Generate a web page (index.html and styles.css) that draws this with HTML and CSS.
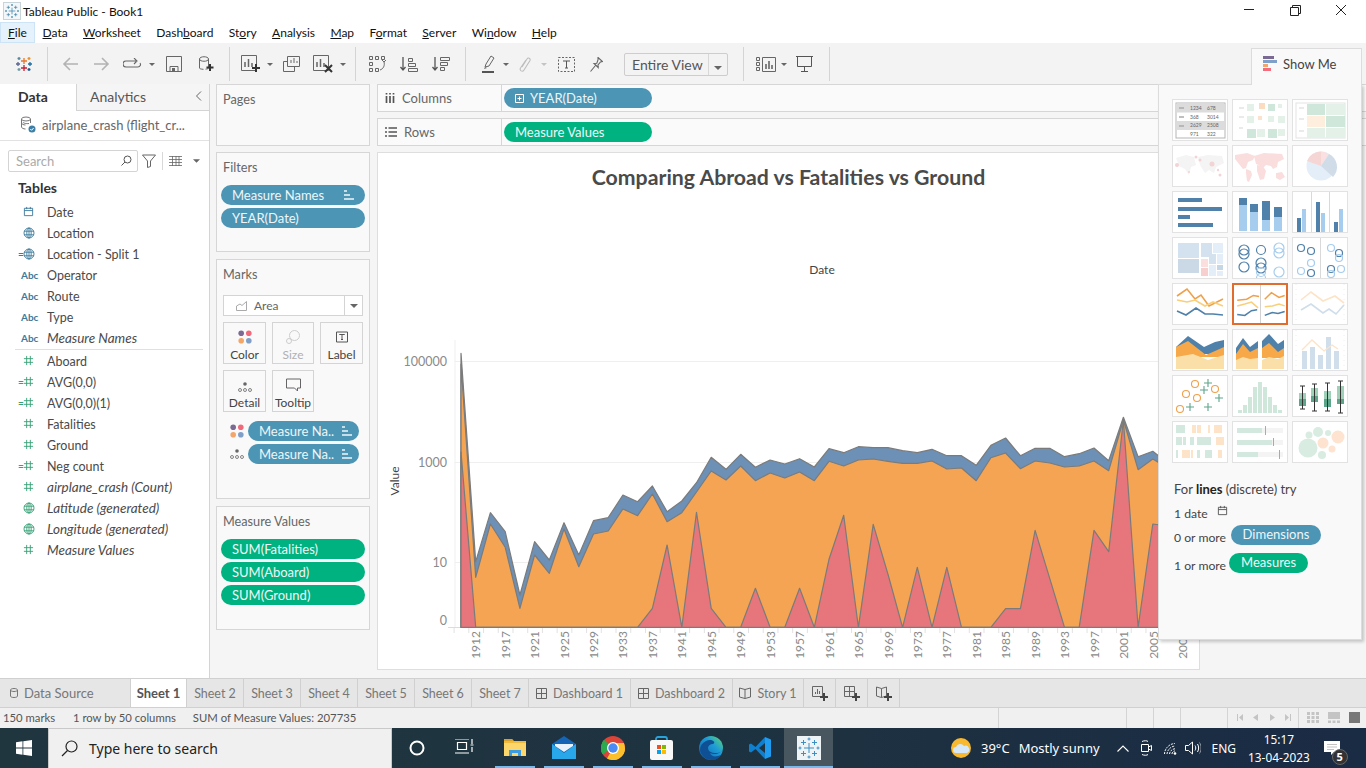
FILE: index.html
```html
<!DOCTYPE html>
<html>
<head>
    <title>Tableau Public - Book1</title>
    <link rel="stylesheet" href="styles.css">
</head>
<body>
<svg class="sprite" width="0" height="0">
    <defs>
        <symbol id="cal" viewBox="0 0 12 12"><path d="M1.5 2.5h9v8h-9zM1.5 5h9M4 1v2.5M8 1v2.5" fill="none" stroke="currentColor"/></symbol>
        <symbol id="globe" viewBox="0 0 12 12"><g fill="none" stroke="currentColor" stroke-width=".9"><circle cx="6" cy="6" r="5"/><ellipse cx="6" cy="6" rx="2.2" ry="5"/><path d="M1 4.2h10M1 7.8h10M6 1v10"/></g></symbol>
        <symbol id="hash" viewBox="0 0 12 12"><path d="M4 1v10M8 1v10M1 4h10M1 8h10" fill="none" stroke="currentColor"/></symbol>
        <symbol id="sort" viewBox="0 0 10 10"><path d="M0 1h3M0 5h6M0 9h10" fill="none" stroke="currentColor" stroke-width="1.6"/></symbol>
        <symbol id="caret" viewBox="0 0 8 4"><path d="M0 0h8L4 4z" fill="currentColor"/></symbol>
        <symbol id="dots" viewBox="0 0 14 14"><circle cx="3.2" cy="3.2" r="2.8" fill="#7b6a94"/><circle cx="10.8" cy="3.2" r="2.8" fill="#ef6b7c"/><circle cx="3.2" cy="10.8" r="2.8" fill="#f2a66a"/><circle cx="10.8" cy="10.8" r="2.8" fill="#7f9fc8"/></symbol>
        <symbol id="detail" viewBox="0 0 14 10"><circle cx="7" cy="2" r="1.8" fill="#666"/><g fill="none" stroke="#666" stroke-width=".8"><circle cx="2" cy="8" r="1.5"/><circle cx="7" cy="8" r="1.5"/><circle cx="12" cy="8" r="1.5"/></g></symbol>
        <symbol id="tableau" viewBox="0 0 24 24"><path d="M12 7v10M7 12h10M6.500 4v5M4 6.500h5M17.500 4v5M15 6.500h5M6.500 15v5M4 17.500h5M17.500 15v5M15 17.500h5M12 1.500v3M10.500 3h3M12 19.500v3M10.500 21h3M3 10.500v3M1.500 12h3M21 10.500v3M19.500 12h3" fill="none" stroke="currentColor"/></symbol>
        <symbol id="plus" viewBox="0 0 8 8"><path d="M4 0v8M0 4h8" stroke="#444" stroke-width="2"/></symbol>
    </defs>
</svg>

<div class="app">
    <div class="titlebar">
        <svg class="app-icon" width="18" height="18" viewBox="0 0 18 18"><rect x=".5" y=".5" width="17" height="17" fill="#f4f7f9" stroke="#c9d3da"/><svg x="1" y="1" width="16" height="16" color="#2f7ba6"><use href="#tableau"/></svg></svg>
        <span class="app-title">Tableau Public - Book1</span>
        <div class="win-btns">
            <svg width="46" height="22" viewBox="0 0 46 22"><path d="M18 9.5h10" stroke="#222"/></svg>
            <svg width="46" height="22" viewBox="0 0 46 22"><path d="M18.5 7.5h8v8h-8zM20.5 7.5v-2h8v8h-2" fill="none" stroke="#222"/></svg>
            <svg width="46" height="22" viewBox="0 0 46 22"><path d="M18 5l10 10M28 5L18 15" stroke="#222" fill="none"/></svg>
        </div>
    </div>

    <div class="menubar">
        <span class="menu-item menu-active"><u>F</u>ile</span>
        <span class="menu-item"><u>D</u>ata</span>
        <span class="menu-item"><u>W</u>orksheet</span>
        <span class="menu-item">Dash<u>b</u>oard</span>
        <span class="menu-item">St<u>o</u>ry</span>
        <span class="menu-item"><u>A</u>nalysis</span>
        <span class="menu-item"><u>M</u>ap</span>
        <span class="menu-item">F<u>o</u>rmat</span>
        <span class="menu-item"><u>S</u>erver</span>
        <span class="menu-item">Wi<u>n</u>dow</span>
        <span class="menu-item"><u>H</u>elp</span>
    </div>

    <div class="toolbar">
        <div class="tb-group tb-logo">
            <svg width="18" height="18" viewBox="0 0 18 18"><g fill="none" stroke-width="1.3"><path d="M9 3v6M6 6h6" stroke="#e8762c"/><path d="M9 10v6M6 13h6" stroke="#c72037"/><path d="M3 7v4M1 9h4" stroke="#5b6591"/><path d="M15 7v4M13 9h4" stroke="#1f6fa5"/><path d="M4 2v3M2.500 3.500h3" stroke="#59879b"/><path d="M14 2v3M12.500 3.500h3" stroke="#eb912b"/><path d="M4 13v3M2.500 14.500h3" stroke="#7099a6"/><path d="M14 13v3M12.500 14.500h3" stroke="#1c5a8c"/></g></svg>
        </div>
        <div class="tb-group tb-g2">
            <span class="tb-btn"><svg width="16" height="14" viewBox="0 0 16 14"><path d="M16 7H2M8 1L2 7l6 6" fill="none" stroke="#b3b3b3" stroke-width="1.6"/></svg></span>
            <span class="tb-btn"><svg width="16" height="14" viewBox="0 0 16 14"><path d="M0 7h14M8 1l6 6-6 6" fill="none" stroke="#b3b3b3" stroke-width="1.6"/></svg></span>
            <span class="tb-btn tb-narrow"><svg width="19" height="12" viewBox="0 0 19 12"><path d="M13 3H3a2.500 2.500 0 0 0 0 6h12a2.500 2.500 0 0 0 2-4M11 0l3 3-3 3" fill="none" stroke="#666" stroke-width="1.1"/></svg></span>
            <span class="tb-caret"><svg width="6" height="3"><use href="#caret"/></svg></span>
            <span class="tb-btn"><svg width="16" height="16" viewBox="0 0 16 16"><path d="M.5.5h15v15H.5zM4 15.500v-5h8v5" fill="none" stroke="#666"/><rect x="6" y="12" width="3" height="3.500" fill="#666"/></svg></span>
            <span class="tb-btn"><svg width="15" height="16" viewBox="0 0 15 16"><path d="M.5 3c0-3 9-3 9 0v9c0 .7-1.500 1-3 1.200M.5 3c0 3 9 3 9 0M.5 3v9c0 .7 1.500 1.200 4 1.300" fill="none" stroke="#666"/><path d="M11 8v7M7.500 11.500h7" stroke="#333" stroke-width="2"/></svg></span>
        </div>
        <div class="tb-group tb-g3">
            <span class="tb-btn"><svg width="19" height="18" viewBox="0 0 19 18"><path d="M.5.5h15v15H.5z" fill="none" stroke="#666"/><path d="M4 7v5M7.500 4v8M11 8v4" stroke="#666" stroke-width="1.500"/><path d="M15 9v8M11 13h8" stroke="#333" stroke-width="2"/></svg></span>
            <span class="tb-caret tb-tight"><svg width="6" height="3"><use href="#caret"/></svg></span>
            <span class="tb-btn tb-shift"><svg width="17" height="16" viewBox="0 0 17 16"><path d="M4.500.5h12v10h-12zM.5 5.500h4M.5 5.500v10h11v-5" fill="none" stroke="#666"/><path d="M8 7V4M11 7V2M14 7V5" stroke="#666"/></svg></span>
            <span class="tb-btn"><svg width="20" height="18" viewBox="0 0 20 18"><path d="M.5.5h15v15H.5z" fill="none" stroke="#666"/><path d="M4 7v5M7.500 4v8M11 8v4" stroke="#666" stroke-width="1.500"/><path d="M12 10l7 7M19 10l-7 7" stroke="#333" stroke-width="2"/></svg></span>
            <span class="tb-caret tb-tight"><svg width="6" height="3"><use href="#caret"/></svg></span>
        </div>
        <div class="tb-group tb-g4">
            <span class="tb-btn"><svg width="17" height="16" viewBox="0 0 17 16"><g fill="none" stroke="#666"><path d="M.5.500h3v3h-3zM6.500.500h3v3h-3zM12.500.500h3v3h-3zM.5 6.500h3v3h-3zM.5 12.500h3v3h-3zM6.500 12.500h3v3h-3z"/><path d="M15 6c1 3-.5 7-4 8M13 4l2 2 2-2"/></g></svg></span>
            <span class="tb-btn"><svg width="18" height="15" viewBox="0 0 18 15"><path d="M3 0v13M.5 10L3 13l2.500-3" fill="none" stroke="#555" stroke-width="1.300"/><path d="M8.500 1.500h4v3h-4zM8.500 6.500h7v3h-7zM8.500 11.500h9v3h-9z" fill="none" stroke="#666"/></svg></span>
            <span class="tb-btn"><svg width="18" height="15" viewBox="0 0 18 15"><path d="M3 0v13M.5 10L3 13l2.500-3" fill="none" stroke="#555" stroke-width="1.300"/><path d="M8.500 .5h9v3h-9zM8.500 5.500h7v3h-7zM8.500 10.500h4v3h-4z" fill="none" stroke="#666"/></svg></span>
        </div>
        <div class="tb-group tb-g5">
            <span class="tb-btn tb-narrow"><svg width="13" height="18" viewBox="0 0 13 18"><path d="M3 12l1-3 5-8 3 2-5 8z" fill="none" stroke="#666"/><path d="M0 17h12" stroke="#555" stroke-width="2"/><path d="M2 14l1-2 2 1z" fill="#666"/></svg></span>
            <span class="tb-caret tb-tight"><svg width="6" height="3"><use href="#caret"/></svg></span>
            <span class="tb-btn tb-narrow"><svg width="13" height="17" viewBox="0 0 13 17"><path d="M4 11l5-8c1-2 4-.5 3 1.500L6 14c-1.500 2.500-5 .5-3.500-2L8 4" fill="none" stroke="#bdbdbd" stroke-width="1.100"/></svg></span>
            <span class="tb-caret tb-off"><svg width="6" height="3"><use href="#caret"/></svg></span>
            <span class="tb-btn"><svg width="17" height="15" viewBox="0 0 17 15"><path d="M.5.500h16v14H.5z" fill="none" stroke="#666" stroke-dasharray="2 1.500"/><path d="M5 4h7M8.500 4v7M7 11h3" fill="none" stroke="#555"/></svg></span>
            <span class="tb-btn tb-narrow"><svg width="13" height="15" viewBox="0 0 13 15"><path d="M8 .5l4.500 4-2 .5-2.500 3 .2 2.500L4 6.500 6.800 6.300 8 3zM5.500 8.500L.5 14.500" fill="none" stroke="#666" stroke-width="1.100"/></svg></span>
            <div class="fit-box">
                <span class="fit-label">Entire View</span>
                <span class="fit-arrow"><svg width="8" height="4"><use href="#caret"/></svg></span>
            </div>
        </div>
        <div class="tb-group tb-g6">
            <span class="tb-btn tb-narrow"><svg width="20" height="15" viewBox="0 0 20 15"><path d="M.5.500h3v3h-3zM.5 5.500h3v3h-3zM.5 10.500h3v3h-3zM6.500.500h13v14h-13z" fill="none" stroke="#666"/><path d="M10 12V7M13 12V4M16 12V8" stroke="#666" stroke-width="1.600"/></svg></span>
            <span class="tb-caret tb-tight"><svg width="6" height="3"><use href="#caret"/></svg></span>
            <span class="tb-btn"><svg width="17" height="16" viewBox="0 0 17 16"><path d="M0 .5h17M1.500 1v9.500h14V1M8.500 10.500v4.500M5 15.500h7" fill="none" stroke="#555"/></svg></span>
        </div>
    </div>

    <div class="main">
        <aside class="side">
            <div class="side-tabs">
                <div class="side-tab side-tab-on">Data</div>
                <div class="side-tab">Analytics</div>
                <span class="side-collapse"><svg width="7" height="10" viewBox="0 0 7 10"><path d="M6 .5L1.500 5 6 9.500" fill="none" stroke="#666"/></svg></span>
            </div>
            <div class="ds-row">
                <svg width="16" height="17" viewBox="0 0 16 17"><g fill="none" stroke="#777"><ellipse cx="6" cy="3" rx="4.500" ry="2"/><path d="M1.500 3v8c0 1 2 2 4 2M10.500 3v4M3 6c0 1 3 2 6 1.500M1.500 7c0 1 2 2 4 2"/></g><circle cx="12" cy="13" r="3.500" fill="#3d7fa6"/><path d="M10.300 13l1.300 1.300 2-2.300" stroke="#fff" fill="none"/></svg>
                <span>airplane_crash (flight_cr...</span>
            </div>
            <div class="search-row">
                <div class="search-box">
                    <span>Search</span>
                    <svg width="11" height="11" viewBox="0 0 11 11"><circle cx="6.500" cy="4.500" r="3.500" fill="none" stroke="#555"/><path d="M4 7l-3.500 3.500" stroke="#555"/></svg>
                </div>
                <svg class="search-filter" width="14" height="14" viewBox="0 0 14 14"><path d="M.5 1h13L8.500 7v5.500l-3 1V7z" fill="none" stroke="#666"/></svg>
                <span class="search-sep"></span>
                <svg class="search-list" width="13" height="10" viewBox="0 0 13 10"><path d="M0 .5h13M0 3.500h13M0 6.500h13M0 9.500h13M3.500 0v10M7 0v10M10 0v10" stroke="#666" stroke-width=".8" fill="none"/></svg>
                <svg class="search-caret" width="7" height="4"><use href="#caret"/></svg>
            </div>
            <h4 class="tables-head">Tables</h4>
            <div class="field-list">
                <div class="field dim"><span class="f-icon"><svg width="11" height="11"><use href="#cal"/></svg></span>Date</div>
                <div class="field dim"><span class="f-icon"><svg width="12" height="12"><use href="#globe"/></svg></span>Location</div>
                <div class="field dim"><span class="f-icon"><i class="calc">=</i><svg width="12" height="12"><use href="#globe"/></svg></span>Location - Split 1</div>
                <div class="field dim"><span class="f-icon f-abc">Abc</span>Operator</div>
                <div class="field dim"><span class="f-icon f-abc">Abc</span>Route</div>
                <div class="field dim"><span class="f-icon f-abc">Abc</span>Type</div>
                <div class="field dim field-gen"><span class="f-icon f-abc">Abc</span>Measure Names</div>
                <div class="field-sep"></div>
                <div class="field mea"><span class="f-icon"><svg width="11" height="11"><use href="#hash"/></svg></span>Aboard</div>
                <div class="field mea"><span class="f-icon"><i class="calc">=</i><svg width="11" height="11"><use href="#hash"/></svg></span>AVG(0,0)</div>
                <div class="field mea"><span class="f-icon"><i class="calc">=</i><svg width="11" height="11"><use href="#hash"/></svg></span>AVG(0,0)(1)</div>
                <div class="field mea"><span class="f-icon"><svg width="11" height="11"><use href="#hash"/></svg></span>Fatalities</div>
                <div class="field mea"><span class="f-icon"><svg width="11" height="11"><use href="#hash"/></svg></span>Ground</div>
                <div class="field mea"><span class="f-icon"><i class="calc">=</i><svg width="11" height="11"><use href="#hash"/></svg></span>Neg count</div>
                <div class="field mea field-gen"><span class="f-icon"><svg width="11" height="11"><use href="#hash"/></svg></span>airplane_crash (Count)</div>
                <div class="field mea field-gen"><span class="f-icon"><svg width="12" height="12"><use href="#globe"/></svg></span>Latitude (generated)</div>
                <div class="field mea field-gen"><span class="f-icon"><svg width="12" height="12"><use href="#globe"/></svg></span>Longitude (generated)</div>
                <div class="field mea field-gen"><span class="f-icon"><svg width="11" height="11"><use href="#hash"/></svg></span>Measure Values</div>
            </div>
        </aside>

        <div class="cards">
            <section class="card card-pages"><h5>Pages</h5></section>
            <section class="card card-filters">
                <h5>Filters</h5>
                <div class="pill pill-blue">Measure Names<svg width="10" height="10"><use href="#sort"/></svg></div>
                <div class="pill pill-blue">YEAR(Date)</div>
            </section>
            <section class="card card-marks">
                <h5>Marks</h5>
                <div class="marks-select">
                    <svg width="11" height="10" viewBox="0 0 11 10"><path d="M.5 9.500V5L4 3l2 1.500L10.500.5v9z" fill="none" stroke="#aaa"/></svg>
                    <span>Area</span>
                    <i class="marks-arrow"><svg width="8" height="4"><use href="#caret"/></svg></i>
                </div>
                <div class="marks-grid">
                    <div class="mark-btn"><svg width="14" height="14"><use href="#dots"/></svg>Color</div>
                    <div class="mark-btn mark-off"><svg width="14" height="14" viewBox="0 0 14 14"><g fill="none" stroke="#ccc"><circle cx="8.500" cy="5.500" r="5"/><circle cx="3" cy="11" r="2.500"/></g></svg>Size</div>
                    <div class="mark-btn"><svg width="14" height="14" viewBox="0 0 14 14"><path d="M1.500 2h11v10h-11z" fill="none" stroke="#555"/><path d="M4.500 5V4.500h5V5M7 4.500v5M6 9.500h2" fill="none" stroke="#555"/></svg>Label</div>
                    <div class="mark-btn"><svg width="14" height="10"><use href="#detail"/></svg>Detail</div>
                    <div class="mark-btn"><svg width="15" height="14" viewBox="0 0 15 14"><path d="M.5 1h14v9h-3v3L8.500 10H.5z" fill="none" stroke="#666"/></svg>Tooltip</div>
                </div>
                <div class="mark-pill">
                    <svg width="14" height="14"><use href="#dots"/></svg>
                    <div class="pill pill-blue">Measure Na..<svg width="10" height="10"><use href="#sort"/></svg></div>
                </div>
                <div class="mark-pill">
                    <svg width="14" height="10"><use href="#detail"/></svg>
                    <div class="pill pill-blue">Measure Na..<svg width="10" height="10"><use href="#sort"/></svg></div>
                </div>
            </section>
            <section class="card card-values">
                <h5>Measure Values</h5>
                <div class="pill pill-green">SUM(Fatalities)</div>
                <div class="pill pill-green">SUM(Aboard)</div>
                <div class="pill pill-green">SUM(Ground)</div>
            </section>
        </div>

        <div class="workspace">
            <div class="shelf">
                <div class="shelf-label"><svg width="10" height="10" viewBox="0 0 10 10"><path d="M1.500 3v7M5 3v7M8.500 3v7M1.500 0v1.500M5 0v1.500M8.500 0v1.500" stroke="#555" stroke-width="1.700"/></svg>Columns</div>
                <div class="pill pill-blue pill-shelf"><svg class="pill-plus" width="9" height="9" viewBox="0 0 9 9"><path d="M.5.500h8v8h-8zM2.500 4.500h4M4.500 2.500v4" fill="none" stroke="#fff"/></svg>YEAR(Date)</div>
            </div>
            <div class="shelf">
                <div class="shelf-label"><svg width="12" height="10" viewBox="0 0 12 10"><path d="M0 1h2M3.500 1H12M0 5h2M3.500 5H12M0 9h2M3.500 9H12" stroke="#555" stroke-width="1.600"/></svg>Rows</div>
                <div class="pill pill-green pill-shelf">Measure Values</div>
            </div>
            <div class="sheet">
                <h2 class="sheet-title">Comparing Abroad vs Fatalities vs Ground</h2>
                <svg class="chart" width="821" height="470" viewBox="378 200 821 470">
                    <text class="ax-head" x="822" y="274" text-anchor="middle">Date</text>
                    <text class="ax-head" transform="translate(399 481) rotate(-90)" text-anchor="middle">Value</text>
                    <path d="M455 340V628M455 361.500H1199M455 462.500H1199M455 562.500H1199" fill="none" stroke="#efefef"/>
                    <path d="M448 627.500H1199" fill="none" stroke="#dcdcdc"/>
                    <path d="M453.600 630.500H1199" fill="none" stroke="#e2e2e2" stroke-width="5" stroke-dasharray="1 13.720"/>
                    <g class="ax-y" text-anchor="end">
                        <text x="447" y="366">100000</text>
                        <text x="447" y="467">1000</text>
                        <text x="447" y="567">10</text>
                        <text x="447" y="625">0</text>
                    </g>
                    <g class="areas">
                        <polygon class="a-blue" points="461,627.3 461,353.3 475.7,561.7 490.4,512.7 505.2,531.7 519.9,595 534.6,541.7 549.3,560 564,522.700 578.8,555 593.5,520.7 608.2,517.7 622.9,495 637.6,501.7 652.4,486 667.1,511.7 681.8,501 696.5,482.7 711.2,457.3 726,469.3 740.7,454.3 755.4,467.3 770.1,460 784.8,464 799.6,458.7 814.300,467 829,448.7 843.700,452.7 858.400,446.7 873.200,447.7 887.900,447.7 902.600,450.7 917.300,452.7 932,449.3 946.800,455.7 961.500,455.7 976.200,465.3 990.900,445.3 1005.600,438 1020.400,455.7 1035.100,448.3 1049.800,448.3 1064.500,456.7 1079.200,453.700 1094,448 1108.700,460.7 1123.400,417.3 1138.100,456.700 1152.800,451.3 1167.600,463 1182,460 1182,627.3"/>
                        <polygon class="a-orange" points="461,627.3 461,364 475.7,577.3 490.4,524 505.2,547.3 519.9,608.3 534.6,555 549.3,573.3 564,529 578.8,566.7 593.5,534 608.2,531 622.9,509 637.6,515.7 652.4,494 667.1,521.7 681.8,512.7 696.5,492 711.2,471 726,480 740.7,466 755.4,480.7 770.1,473 784.8,478 799.6,472 814.300,480.7 829,461.3 843.700,466 858.400,460 873.200,459 887.900,461.3 902.600,463.3 917.300,463.3 932,461 946.800,469 961.500,468 976.200,480.7 990.900,457.7 1005.600,453 1020.400,468.7 1035.100,461 1049.800,463 1064.500,467 1079.200,466 1094,461 1108.700,470.7 1123.400,420 1138.100,469.700 1152.800,459 1167.600,468 1182,465 1182,627.3"/>
                        <polygon class="a-red" points="461,627.3 461,452 475.7,627.3 637.6,627.3 652.4,608.3 667.1,545 681.8,627.3 696.5,512.3 711.2,608.3 726,627.3 740.7,627.3 755.4,588.3 770.1,627.3 784.8,627.3 799.6,588.3 814.300,627.3 829,559.3 843.700,515.3 858.400,627.3 873.200,524.3 887.900,574 902.600,627.3 917.300,567.3 932,627.3 946.800,567.3 961.500,627.3 976.200,627.3 990.900,627.3 1005.600,608.7 1020.400,608.7 1035.100,530.3 1049.800,578.700 1064.500,627.3 1079.200,627.3 1094,530.3 1108.700,551.7 1123.400,420 1138.100,627.3 1152.800,524 1167.600,526 1182,540 1182,627.3"/>
                    </g>
                    <g class="ax-x" text-anchor="end">
                        <text transform="translate(480 631) rotate(-90)">1912</text>
                        <text transform="translate(509.600 631) rotate(-90)">1917</text>
                        <text transform="translate(539 631) rotate(-90)">1921</text>
                        <text transform="translate(568.500 631) rotate(-90)">1925</text>
                        <text transform="translate(598 631) rotate(-90)">1929</text>
                        <text transform="translate(627.400 631) rotate(-90)">1933</text>
                        <text transform="translate(656.800 631) rotate(-90)">1937</text>
                        <text transform="translate(686.300 631) rotate(-90)">1941</text>
                        <text transform="translate(715.800 631) rotate(-90)">1945</text>
                        <text transform="translate(745.200 631) rotate(-90)">1949</text>
                        <text transform="translate(774.700 631) rotate(-90)">1953</text>
                        <text transform="translate(804 631) rotate(-90)">1957</text>
                        <text transform="translate(833.600 631) rotate(-90)">1961</text>
                        <text transform="translate(863 631) rotate(-90)">1965</text>
                        <text transform="translate(892.500 631) rotate(-90)">1969</text>
                        <text transform="translate(922 631) rotate(-90)">1973</text>
                        <text transform="translate(951.400 631) rotate(-90)">1977</text>
                        <text transform="translate(980.800 631) rotate(-90)">1981</text>
                        <text transform="translate(1010.300 631) rotate(-90)">1985</text>
                        <text transform="translate(1039.800 631) rotate(-90)">1989</text>
                        <text transform="translate(1069.200 631) rotate(-90)">1993</text>
                        <text transform="translate(1098.600 631) rotate(-90)">1997</text>
                        <text transform="translate(1128 631) rotate(-90)">2001</text>
                        <text transform="translate(1157.500 631) rotate(-90)">2005</text>
                        <text transform="translate(1187 631) rotate(-90)">2009</text>
                    </g>
                </svg>
            </div>
        </div>
    </div>

    <div class="showme">
        <div class="showme-tab">
            <svg width="14" height="15" viewBox="0 0 14 15"><rect width="11" height="3" fill="#7a6a94"/><rect y="4" width="14" height="3" fill="#7fa1c9"/><rect y="8" width="5" height="3" fill="#f4a56a"/><rect y="12" width="8" height="3" fill="#f56d7c"/></svg>
            Show Me
        </div>
        <div class="showme-panel">
            <div class="thumbs">
                <svg class="thumb" viewBox="0 0 54 40"><rect x="3" y="3" width="49" height="35" fill="#fff" stroke="#b5b5b5"/><path d="M3.500 3.500h48v9h-48zM3.500 21h48v9h-48z" fill="#dcdcdc"/><path d="M6 8h5M6 17h5M6 26h5" stroke="#aaa" stroke-width="1.500"/><g class="thumb-txt"><text x="17" y="10">1234</text><text x="34" y="10">678</text><text x="17" y="19">368</text><text x="34" y="19">3014</text><text x="17" y="27">2629</text><text x="34" y="27">2508</text><text x="17" y="36">971</text><text x="34" y="36">322</text></g></svg>
                <svg class="thumb" viewBox="0 0 54 40"><g fill="#e3f1e9"><rect x="14" y="4" width="7" height="7"/><rect x="35" y="4" width="7" height="7" fill="#cfe6da"/><rect x="45" y="4" width="4" height="4"/><rect x="14" y="16" width="7" height="7"/><rect x="35" y="16" width="6" height="6"/><rect x="45" y="16" width="7" height="7"/><rect x="14" y="29" width="9" height="9" fill="#cfe6da"/><rect x="24" y="29" width="8" height="8"/><rect x="35" y="29" width="9" height="9" fill="#cfe6da"/><rect x="45" y="29" width="7" height="7"/></g><rect x="26" y="3" width="6" height="6" fill="#fbdcc0"/><rect x="25" y="16" width="4" height="4" fill="#fbe2cc"/><path d="M6 8h5M6 17h5M6 28h4" stroke="#e3e3e3" stroke-width="1.500"/></svg>
                <svg class="thumb" viewBox="0 0 54 40"><rect x="3" y="3" width="49" height="35" fill="#fff" stroke="#e3e3e3"/><g><rect x="14" y="4" width="18" height="11" fill="#cfe6da"/><rect x="33" y="4" width="19" height="11" fill="#e3f1e9"/><rect x="14" y="16" width="18" height="11" fill="#fdeedd"/><rect x="33" y="16" width="19" height="11" fill="#cfe6da"/><rect x="14" y="28" width="18" height="10" fill="#e3f1e9"/><rect x="33" y="28" width="19" height="10" fill="#e3f1e9"/></g><path d="M6 8h5M6 19h5M6 31h5" stroke="#e3e3e3" stroke-width="1.500"/></svg>

                <svg class="thumb" viewBox="0 0 54 40"><path d="M3 12l10-3 8 2 2 8-5 2-2 8-4-6-6-3zM25 11l10-2 14 1 2 7-8 4-2 6-5-3-4 3-5-8z" fill="#f4f4f4"/><g fill="#f4d3d4"><circle cx="4" cy="19" r="2"/><circle cx="23" cy="11" r="1.500"/><circle cx="27" cy="14" r="1.500"/><circle cx="39" cy="18" r="2.500"/><circle cx="47" cy="29" r="1.500"/><circle cx="45" cy="24" r="1.200"/><circle cx="16" cy="26" r="1"/></g></svg>
                <svg class="thumb" viewBox="0 0 54 40"><path d="M2 9l12-2 8 3-2 4-5 2-2 6-3 1-4-5-4-5zM13 23l5 2 1 4-3 7-2-1-1-8zM21 10l10-3 18 1 2 5-6 3-1 5-4 2-2-3-5-1-2 2-8-3-1-4zM24 19l6 1 3 5-2 8-4 1-3-9zM43 27l6-1 3 5-5 3-4-2z" fill="#fadede"/></svg>
                <svg class="thumb" viewBox="0 0 54 40"><circle cx="28" cy="20" r="14.500" fill="#e3eef8"/><path d="M28 20L14 15A14.500 14.500 0 0 1 28 5.500z" fill="#f6d5d5"/><path d="M28 20V5.500A14.500 14.500 0 0 1 36 8z" fill="#fae0e0"/><path d="M28 20l8-12a14.500 14.500 0 0 1 4 23z" fill="#d0dce8"/></svg>

                <svg class="thumb" viewBox="0 0 54 40"><g fill="#4f81aa"><rect x="5" y="6" width="24" height="4"/><rect x="5" y="15" width="44" height="4"/><rect x="5" y="23" width="12" height="4"/><rect x="5" y="31" width="35" height="4"/></g></svg>
                <svg class="thumb" viewBox="0 0 54 40"><g fill="#a6cdee"><rect x="6" y="13" width="8" height="26"/><rect x="17" y="20" width="8" height="19"/><rect x="29" y="28" width="8" height="11"/><rect x="41" y="25" width="8" height="14"/></g><g fill="#4f81aa"><rect x="6" y="6" width="8" height="7"/><rect x="17" y="12" width="8" height="8"/><rect x="29" y="9" width="8" height="19"/><rect x="41" y="15" width="8" height="10"/></g></svg>
                <svg class="thumb" viewBox="0 0 54 40"><path d="M18.500 0v40M36.500 0v40" stroke="#d9d9d9"/><g fill="#4f81aa"><rect x="4" y="26" width="4" height="14"/><rect x="23" y="10" width="4" height="30"/><rect x="41" y="30" width="4" height="10"/></g><g fill="#a6cdee"><rect x="9" y="17" width="4" height="23"/><rect x="28" y="21" width="4" height="19"/><rect x="46" y="17" width="4" height="23"/></g></svg>

                <svg class="thumb" viewBox="0 0 54 40"><rect x="5" y="5" width="21" height="15" fill="#d4e2ef"/><rect x="5" y="21" width="21" height="14" fill="#cbd9e6"/><rect x="28" y="5" width="11" height="14" fill="#d4e2ef"/><rect x="40" y="5" width="10" height="10" fill="#e3eef8"/><rect x="28" y="21" width="7" height="8" fill="#fbdede"/><rect x="36" y="16" width="7" height="10" fill="#d4e2ef"/><rect x="44" y="16" width="6" height="10" fill="#e3eef8"/><rect x="28" y="30" width="7" height="8" fill="#f8cfcf"/><rect x="36" y="27" width="7" height="11" fill="#e3eef8"/><rect x="44" y="27" width="6" height="5" fill="#c5d6e5"/><rect x="44" y="33" width="6" height="5" fill="#e3eef8"/></svg>
                <svg class="thumb" viewBox="0 0 54 40"><g fill="none" stroke-width="1.200"><g stroke="#4f81aa"><circle cx="11" cy="12" r="5"/><circle cx="11" cy="16" r="5"/><circle cx="28" cy="12" r="4.500"/><circle cx="11" cy="29" r="5"/><circle cx="28" cy="25" r="5"/><circle cx="28" cy="30" r="5"/></g><g stroke="#a6cdee"><circle cx="46" cy="10" r="5"/><circle cx="46" cy="15" r="5"/><circle cx="46" cy="34" r="5"/><circle cx="28" cy="40" r="4.500"/><circle cx="28" cy="34" r="4.500"/></g></g></svg>
                <svg class="thumb" viewBox="0 0 54 40"><path d="M27.500 0v40" stroke="#d9d9d9"/><g fill="none" stroke-width="1.200"><g stroke="#4f81aa"><circle cx="8" cy="10" r="3.500"/><circle cx="18" cy="13" r="3.500"/><circle cx="18" cy="35" r="3.500"/><circle cx="46" cy="15" r="3.500"/><circle cx="38" cy="31" r="3.500"/></g><g stroke="#a6cdee"><circle cx="8" cy="33" r="3.500"/><circle cx="18" cy="25" r="3.500"/><circle cx="38" cy="10" r="3.500"/><circle cx="46" cy="20" r="3.500"/><circle cx="38" cy="36" r="3.500"/><circle cx="48" cy="31" r="3.500"/></g></g></svg>

                <svg class="thumb" viewBox="0 0 54 40"><g fill="none" stroke-width="1.600"><path d="M4 12l10-7 8 10 6-4 8 11 14-7" stroke="#f0a04b"/><path d="M4 16l10 2 8-2 10 6 8-4 10 4" stroke="#f9cf7a"/><path d="M4 27l9 4 10-7 9 6 8 0 10 1" stroke="#4f81aa"/></g></svg>
                <svg class="thumb thumb-on" viewBox="0 0 54 40"><path d="M27.500 0v40" stroke="#cfcfcf"/><g fill="none" stroke-width="1.600"><path d="M3 16l10-1 7-4 6 1M32 15l7-7 8 5 6-2" stroke="#f0a04b"/><path d="M3 22l8-2 7-2 7 6M32 23l8-1 7-2 6 2" stroke="#f9cf7a"/><path d="M3 31l8 1 7-5 6-1M32 32l8-3 6 1 7-2" stroke="#4f81aa"/></g></svg>
                <svg class="thumb" viewBox="0 0 54 40"><g fill="none" stroke-width="1.600"><path d="M8 16l10-8 12 9 12-5 9 7" stroke="#fde3c8"/><path d="M8 26l10-6 12 9 6-4 7 5 8-9" stroke="#cfdeea"/></g><path d="M3 0v40M51 0v40" stroke="#eee" stroke-dasharray="1 4"/></svg>

                <svg class="thumb" viewBox="0 0 54 40"><path d="M3 17l12-11 16 11 11-5 9-2v14H3z" fill="#4f81aa"/><path d="M3 17l12-6 18 14 18-8v10H3z" fill="#f7a848"/><path d="M3 27l17-3 15 6 16-5v14H3z" fill="#fbdfa8"/></svg>
                <svg class="thumb" viewBox="0 0 54 40"><path d="M3 18l7-10 7 9 8-6v14H3zM29 11l7-7 9 10 6-4v14H29z" fill="#4f81aa"/><path d="M3 24l7-10 7 8 8-4v14H3zM29 18l7-5 9 9 6-4v10H29z" fill="#f7a848"/><path d="M3 30l7-3 7 2 8-1v11H3zM29 30l7-3 9 2 6-3v13H29z" fill="#fbdfa8"/></svg>
                <svg class="thumb" viewBox="0 0 54 40"><g fill="#cfdeea"><rect x="9" y="21" width="5" height="18"/><rect x="17" y="17" width="5" height="22"/><rect x="25" y="25" width="5" height="14"/><rect x="33" y="7" width="5" height="32"/><rect x="41" y="21" width="5" height="18"/></g><path d="M9 20l10-10 12 11 8-6 6 4" fill="none" stroke="#fde3c8" stroke-width="1.300"/><path d="M3 0v40M51 0v40" stroke="#eee" stroke-dasharray="1 4"/></svg>

                <svg class="thumb" viewBox="0 0 54 40"><g fill="none" stroke="#f0a04b" stroke-width="1.100"><circle cx="22" cy="8" r="3.500"/><circle cx="42" cy="13" r="3.500"/><circle cx="13" cy="18" r="3.500"/><circle cx="24" cy="22" r="3.500"/><circle cx="7" cy="33" r="3.500"/></g><path d="M35 3v8M31 7h8M31 10v8M27 14h8M46 18v8M42 22h8M17 27v8M13 31h8M35 27v8M31 31h8" stroke="#5da58a" stroke-width="1.100" fill="none"/></svg>
                <svg class="thumb" viewBox="0 0 54 40"><g fill="#cfe6da"><rect x="5" y="34" width="4" height="3"/><rect x="10" y="29" width="4" height="8"/><rect x="15" y="21" width="4" height="16"/><rect x="20" y="11" width="4" height="26"/><rect x="25" y="6" width="4" height="31"/><rect x="30" y="11" width="4" height="26"/><rect x="35" y="21" width="4" height="16"/><rect x="40" y="29" width="4" height="8"/><rect x="45" y="34" width="4" height="3"/></g></svg>
                <svg class="thumb" viewBox="0 0 54 40"><g fill="#9fd1b8"><rect x="6" y="17" width="7" height="6"/><rect x="18" y="12" width="7" height="8"/><rect x="31" y="15" width="7" height="8"/><rect x="44" y="10" width="7" height="13"/></g><g fill="#5da58a"><rect x="6" y="23" width="7" height="7"/><rect x="18" y="20" width="7" height="6"/><rect x="31" y="23" width="7" height="8"/><rect x="44" y="23" width="7" height="5"/></g><path d="M7 10h5M9.500 10v23M7 33h5M19 8h5M21.500 8v27M19 35h5M32 7h5M34.500 7v28M32 35h5M45 5h5M47.500 5v32M45 37h5" stroke="#333" fill="none"/></svg>

                <svg class="thumb" viewBox="0 0 54 40"><g fill="#d3e8de"><rect x="3" y="3" width="9" height="8"/><rect x="3" y="15" width="6" height="8"/><rect x="10" y="15" width="3" height="8"/><rect x="17" y="15" width="4" height="8"/><rect x="24" y="15" width="14" height="8"/><rect x="3" y="28" width="2" height="8"/><rect x="24" y="28" width="3" height="8"/><rect x="32" y="28" width="7" height="8"/></g><g fill="#fde3c8"><rect x="19" y="3" width="4" height="8"/><rect x="24" y="3" width="4" height="8"/><rect x="35" y="3" width="2" height="8"/><rect x="41" y="3" width="8" height="8"/><rect x="43" y="15" width="8" height="8"/><rect x="9" y="28" width="8" height="8"/><rect x="18" y="28" width="2" height="8"/><rect x="45" y="28" width="4" height="8"/></g></svg>
                <svg class="thumb" viewBox="0 0 54 40"><g fill="#f4f4f4"><rect x="4" y="6" width="46" height="5"/><rect x="4" y="18" width="46" height="5"/><rect x="4" y="30" width="46" height="5"/></g><g fill="#d3e8de"><rect x="4" y="6" width="25" height="5"/><rect x="4" y="18" width="35" height="5"/><rect x="4" y="30" width="21" height="5"/></g><path d="M32.500 4v9M40.500 16v8M46.500 28v9" stroke="#aaa"/></svg>
                <svg class="thumb" viewBox="0 0 54 40"><g fill="#d8ece2"><circle cx="15" cy="26" r="9.500"/><circle cx="25" cy="10" r="5"/><circle cx="16" cy="13" r="3.500"/><circle cx="35" cy="11" r="3"/><circle cx="29" cy="33" r="4"/></g><g fill="#fde3d0"><circle cx="30" cy="21" r="5.500"/><circle cx="45" cy="15" r="6.500"/><circle cx="39" cy="27" r="3.500"/></g></svg>
            </div>
            <p class="hint hint-first">For <b>lines</b> (discrete) try</p>
            <p class="hint hint-date">1 date <svg width="11" height="11"><use href="#cal"/></svg></p>
            <p class="hint hint-dim">0 or more <span class="hint-pill pill-blue">Dimensions</span></p>
            <p class="hint hint-mea">1 or more <span class="hint-pill pill-green">Measures</span></p>
        </div>
    </div>

    <div class="tabs">
        <div class="tab tab-src"><svg width="8" height="10" viewBox="0 0 8 10"><path d="M.5 2c0-2 7-2 7 0v6c0 2-7 2-7 0zM.5 2c0 2 7 2 7 0" fill="none" stroke="#777"/></svg>Data Source</div>
        <div class="tab tab-on">Sheet 1</div>
        <div class="tab tab-sheet">Sheet 2</div>
        <div class="tab tab-sheet">Sheet 3</div>
        <div class="tab tab-sheet">Sheet 4</div>
        <div class="tab tab-sheet">Sheet 5</div>
        <div class="tab tab-sheet">Sheet 6</div>
        <div class="tab tab-sheet">Sheet 7</div>
        <div class="tab tab-dash"><svg width="11" height="11" viewBox="0 0 11 11"><path d="M.5.500h10v10H.5zM.5 5.500h10M5.500.500v10" fill="none" stroke="#666"/></svg>Dashboard 1</div>
        <div class="tab tab-dash"><svg width="11" height="11" viewBox="0 0 11 11"><path d="M.5.500h10v10H.5zM.5 5.500h10M5.500.500v10" fill="none" stroke="#666"/></svg>Dashboard 2</div>
        <div class="tab tab-story"><svg width="12" height="12" viewBox="0 0 12 12"><path d="M.5 1l5.500 1.500L11.500 1v9L6 11.500.5 10zM6 2.500v9" fill="none" stroke="#666"/></svg>Story 1</div>
        <div class="tab tab-new"><svg width="16" height="15" viewBox="0 0 16 15"><path d="M.5.500h10v10H.5z" fill="none" stroke="#666"/><path d="M3.500 8V6M5.500 8V3M7.500 8V5" stroke="#666"/><svg x="8" y="7" width="8" height="8"><use href="#plus"/></svg></svg></div>
        <div class="tab tab-new"><svg width="16" height="15" viewBox="0 0 16 15"><path d="M.5.500h10v10H.5zM.5 5.500h10M5.500.500v10" fill="none" stroke="#666"/><svg x="8" y="7" width="8" height="8"><use href="#plus"/></svg></svg></div>
        <div class="tab tab-new"><svg width="16" height="15" viewBox="0 0 16 15"><path d="M.5 1l5 1.500 5-1.500v9l-5 1.500-5-1.500zM5.500 2.500v9" fill="none" stroke="#666"/><svg x="8" y="7" width="8" height="8"><use href="#plus"/></svg></svg></div>
    </div>

    <div class="status">
        <span class="st-marks">150 marks</span>
        <span class="st-dims">1 row by 50 columns</span>
        <span class="st-sum">SUM of Measure Values: 207735</span>
        <span class="st-cell st-c1"></span>
        <span class="st-cell st-c2"></span>
        <span class="st-cell st-c3"></span>
        <span class="st-cell st-c4"></span>
        <span class="st-cell st-nav">
            <svg width="56" height="9" viewBox="0 0 56 9"><g fill="#c4c4c4"><path d="M1 1h1v7H1zM7 1v7L3 4.500zM22 1v7l-5-3.500zM34 1l5 3.500L34 8zM49 1l4 3.500L49 8zM54 1h1v7h-1z"/></g></svg>
        </span>
        <span class="st-cell st-views">
            <svg width="12" height="11" viewBox="0 0 12 11"><path d="M0 0h3v3H0zM4.500 0h3v3h-3zM9 0h3v3H9zM0 4h3v3H0zM4.500 4h3v3h-3zM9 4h3v3H9zM0 8h3v3H0zM4.500 8h3v3h-3zM9 8h3v3H9z" fill="#c4c4c4"/></svg>
            <svg width="12" height="11" viewBox="0 0 12 11"><path d="M0 0h12v7H0zM0 8.500h3V11H0zM4.500 8.500h3V11h-3zM9 8.500h3V11H9z" fill="#c4c4c4"/></svg>
            <svg width="11" height="11" viewBox="0 0 11 11"><rect width="11" height="11" fill="#777"/></svg>
        </span>
    </div>

    <div class="taskbar">
        <span class="tk-start"><svg width="16" height="16" viewBox="0 0 16 16"><path d="M0 2.200l6.500-.9v6.300H0zM7.300 1.200L16 0v7.600H7.300zM0 8.400h6.500v6.300L0 13.800zM7.300 8.400H16V16l-8.700-1.200z" fill="#fff"/></svg></span>
        <div class="tk-search">
            <svg width="17" height="17" viewBox="0 0 17 17"><circle cx="10.500" cy="6.500" r="5.500" fill="none" stroke="#222" stroke-width="1.200"/><path d="M6.500 10.500L1 16" stroke="#222" stroke-width="1.200"/></svg>
            <span>Type here to search</span>
        </div>
        <span class="tk-app tk-cortana"><svg width="16" height="16" viewBox="0 0 16 16"><circle cx="8" cy="8" r="6.500" fill="none" stroke="#fff" stroke-width="2"/></svg></span>
        <span class="tk-app tk-view"><svg width="20" height="18" viewBox="0 0 20 18"><path d="M1 0h14M1 14h14M3.500 3.500h9v7h-9zM18 0v5M18 8v5M16.500 6h3" fill="none" stroke="#fff" stroke-width="1.200"/></svg></span>
        <span class="tk-app tk-run"><svg width="22" height="20" viewBox="0 0 22 20"><path d="M0 1h8l2 2h12v15H0z" fill="#f0bb3c"/><path d="M0 5h22v13H0z" fill="#fcd56b"/><path d="M5 12h12v6h-3v-3H8v3H5z" fill="#3d9be0"/><path d="M0 1h8l1 2H0z" fill="#d9a02a"/></svg></span>
        <span class="tk-app tk-run"><svg width="24" height="24" viewBox="0 0 24 24"><path d="M12 0L0 8v15h24V8z" fill="#1565b7"/><path d="M0 8l12 9 12-9v15H0z" fill="#28a8ea"/><path d="M3 8h18v2l-9 6-9-6z" fill="#e8f3fb"/></svg></span>
        <span class="tk-app tk-run"><svg width="24" height="24" viewBox="0 0 24 24"><circle cx="12" cy="12" r="12" fill="#db4437"/><path d="M12 12L1.600 18A12 12 0 0 1 3 4z" fill="#2da94f"/><path d="M12 12h12a12 12 0 0 1-18 10.400z" fill="#fbc02d"/><path d="M12 7h10.900A12 12 0 0 1 24 12a12 12 0 0 1-12 12l5-9z" fill="#fbc02d"/><path d="M1.600 18A12 12 0 0 1 3 4l6 9z" fill="#2da94f"/><circle cx="12" cy="12" r="6" fill="#fff"/><circle cx="12" cy="12" r="4.700" fill="#4a8af4"/></svg></span>
        <span class="tk-app tk-run"><svg width="23" height="24" viewBox="0 0 23 24"><path d="M6 5V3a2 2 0 0 1 2-2h7a2 2 0 0 1 2 2v2" fill="none" stroke="#2aa3dc" stroke-width="1.800"/><rect y="4" width="23" height="20" rx="2" fill="#f8f8f8"/><rect x="7" y="9" width="4" height="4" fill="#f25022"/><rect x="12" y="9" width="4" height="4" fill="#7fba00"/><rect x="7" y="14" width="4" height="4" fill="#00a4ef"/><rect x="12" y="14" width="4" height="4" fill="#ffb900"/></svg></span>
        <span class="tk-app tk-run"><svg width="24" height="24" viewBox="0 0 24 24"><defs><linearGradient id="edgeg" x1="0" y1="1" x2="1" y2="0"><stop offset="0" stop-color="#0c5aa6"/><stop offset=".6" stop-color="#1e9bd7"/><stop offset="1" stop-color="#5fdc6f"/></linearGradient></defs><circle cx="12" cy="12" r="12" fill="url(#edgeg)"/><path d="M24 13c0 2-3 4-7 4-5 0-8-2-8-5 0-2 2-4 5-4 4-2-2-6-7-3C3 7 1 10 1 14c1 6 6 10 12 10 4 0 7-2 9-5l-3 1c-4 1-7 0-8-3 4 2 11 1 13-4z" fill="#0f4f94"/></svg></span>
        <span class="tk-app tk-run"><svg width="24" height="24" viewBox="0 0 24 24"><path d="M17 1L7.500 11 3 7.500 1 8.500v7l2 1L7.500 13 17 23v-6l-6-5 6-5z" fill="#0f7fcf"/><path d="M17 1l6 2.500v17L17 23z" fill="#1f9cf0"/></svg></span>
        <span class="tk-app tk-run tk-active"><svg width="24" height="24" viewBox="0 0 24 24" color="#3d8fc4"><rect width="24" height="24" fill="#eef3f6"/><use href="#tableau"/></svg></span>
        <div class="tk-tray">
            <svg class="tk-sun" width="20" height="20" viewBox="0 0 20 20"><circle cx="10" cy="10" r="10" fill="#f9b92e"/><path d="M5 15a3 3 0 0 1 0-6 4.500 4.500 0 0 1 8-1 3.500 3.500 0 0 1 3 7z" fill="#d5e8f8"/></svg>
            <span class="tk-temp">39°C</span>
            <span class="tk-sky">Mostly sunny</span>
            <svg class="tk-chev" width="12" height="7" viewBox="0 0 12 7"><path d="M.5 6.500L6 1l5.500 5.500" fill="none" stroke="#fff" stroke-width="1.100"/></svg>
            <svg class="tk-meet" width="12" height="16" viewBox="0 0 12 16"><path d="M2 1.500c2-1 5-1 6 0M2 14.500c2 1 5 1 6 0" fill="none" stroke="#fff"/><path d="M1.500 4.500h7v7h-7zM8.500 7l3-1.500v5l-3-1.500" fill="none" stroke="#fff"/></svg>
            <svg class="tk-wifi" width="13" height="13" viewBox="0 0 13 13"><path d="M.5 12A11 11 0 0 1 11 1.500M3 12a9 9 0 0 1 8-8M5.500 12A6 6 0 0 1 11 6.800M8 12a3 3 0 0 1 3-3" fill="none" stroke="#fff" stroke-dasharray="2 1" stroke-width="1"/><circle cx="11" cy="11.500" r="1.300" fill="#fff"/></svg>
            <svg class="tk-vol" width="16" height="14" viewBox="0 0 16 14"><path d="M.5 4.500h3L7.500 1v12l-4-3.500h-3z" fill="none" stroke="#fff"/><path d="M10 4.500c1 1.500 1 3.500 0 5M12.500 3c1.500 2.500 1.500 5.500 0 8" fill="none" stroke="#fff"/><path d="M14.500 1.500c2 3 2 8 0 11" fill="none" stroke="#8b96a3"/></svg>
            <span class="tk-lang">ENG</span>
            <div class="tk-clock"><span>15:17</span><span>13-04-2023</span></div>
            <span class="tk-note"><svg width="16" height="14" viewBox="0 0 16 14"><path d="M0 0h16v11h-6l-3 3v-3H0z" fill="#fff"/><path d="M3 3.500h10M3 6h10M3 8.500h7" stroke="#999" stroke-width=".6"/></svg><b>5</b></span>
        </div>
    </div>
</div>
</body>
</html>
```

FILE: styles.css
```css
* {
    box-sizing: border-box;
}

html, body {
    margin: 0;
    padding: 0;
}

body {
    font-family: Lato, Arial, sans-serif;
    font-size: 13px;
    color: #444;
    background: #fff;
}

.sprite {
    position: absolute;
}

.app {
    position: relative;
    width: 1366px;
    height: 768px;
    overflow: hidden;
    display: flex;
    flex-direction: column;
}

/* title and menu */
.titlebar {
    height: 22px;
    display: flex;
    align-items: center;
    padding-left: 3px;
    background: #fff;
    color: #111;
}

.app-title {
    margin-left: 2px;
    font-size: 12px;
}

.win-btns {
    margin-left: auto;
    display: flex;
    margin-right: 2px;
}

.menubar {
    height: 21px;
    display: flex;
    align-items: center;
    font-size: 12px;
    color: #111;
    background: #fff;
}

.menu-item {
    padding: 0 7.700px;
    height: 21px;
    line-height: 21px;
}

.menu-active {
    background: #e5f1fb;
    border: 1px solid #cde4f7;
    line-height: 19px;
    padding: 0 7px;
}

/* toolbar */
.toolbar {
    height: 41px;
    display: flex;
    padding: 4px 0 3px;
    background: #f3f3f3;
}

.tb-group {
    display: flex;
    align-items: center;
    border-right: 1px solid #d4d4d4;
}

.tb-logo {
    width: 48px;
    justify-content: center;
}

.tb-g2 { width: 182px; padding-left: 6px; }
.tb-g3 { width: 126px; padding-left: 4px; }
.tb-g4 { width: 110px; padding-left: 5px; }
.tb-g5 { width: 278px; padding-left: 8px; }
.tb-g6 { width: 86px; padding-left: 8px; }

.tb-btn {
    width: 32px;
    display: flex;
    justify-content: center;
    flex: none;
}

.tb-narrow {
    width: 28px;
}

.tb-shift {
    margin-left: 1px;
}

.tb-caret {
    width: 12px;
    flex: none;
    display: flex;
    justify-content: center;
    color: #666;
}

.tb-tight {
    width: 8px;
}

.tb-off {
    color: #c4c4c4;
}

.fit-box {
    margin-left: 14px;
    width: 104px;
    height: 23px;
    display: flex;
    align-items: center;
    border: 1px solid #cdcdcd;
    border-radius: 2px;
    font-size: 14px;
    color: #555;
}

.fit-label {
    width: 84px;
    padding-left: 7px;
    border-right: 1px solid #d8d8d8;
    line-height: 21px;
}

.fit-arrow {
    flex: 1;
    text-align: center;
    color: #666;
    line-height: 21px;
}

/* main area */
.main {
    height: 594px;
    display: flex;
    background: #f5f5f5;
}

.side {
    width: 210px;
    background: #fff;
    border-right: 1px solid #d4d4d4;
    flex: none;
}

.side-tabs {
    height: 27px;
    display: flex;
    position: relative;
    background: #f5f5f5;
    border-bottom: 1px solid #d4d4d4;
}

.side-tab {
    width: 78px;
    font-size: 14px;
    line-height: 26px;
    padding-left: 13px;
    color: #555;
}

.side-tab-on {
    width: 77px;
    height: 27px;
    padding-left: 18px;
    font-weight: 700;
    color: #333;
    background: #fff;
    border-right: 1px solid #d4d4d4;
}

.side-collapse {
    margin-left: auto;
    margin-right: 7px;
    line-height: 24px;
}

.ds-row {
    height: 30px;
    display: flex;
    align-items: center;
    gap: 6px;
    padding: 0 0 2px 20px;
    border-bottom: 1px solid #e2e2e2;
    font-size: 13px;
    color: #666;
}

.search-row {
    display: flex;
    align-items: center;
    height: 22px;
    margin-top: 9px;
    padding-left: 8px;
}

.search-box {
    width: 130px;
    height: 22px;
    display: flex;
    align-items: center;
    justify-content: space-between;
    padding: 0 5px 1px 7px;
    border: 1px solid #d4d4d4;
    border-radius: 2px;
    color: #aaa;
    font-size: 13px;
}

.search-filter {
    margin-left: 4px;
}

.search-sep {
    width: 1px;
    height: 18px;
    margin-left: 6px;
    background: #d8d8d8;
}

.search-list {
    margin-left: 6px;
}

.search-caret {
    margin-left: 11px;
    color: #666;
}

.tables-head {
    margin: 6px 0 3px 18px;
    height: 20px;
    line-height: 20px;
    font-size: 14px;
    font-weight: 700;
    color: #333;
}

.field {
    height: 21px;
    display: flex;
    align-items: center;
    padding-top: 1px;
    font-size: 12.500px;
    color: #4a4a4a;
}

.field .f-icon {
    margin-top: -1px;
}

.field-gen {
    padding-top: 0;
    font-size: 13.500px;
    font-style: italic;
}

.field-gen .f-icon {
    margin-top: 0;
}

.f-icon {
    width: 47px;
    height: 21px;
    padding-left: 23px;
    display: flex;
    align-items: center;
    position: relative;
    font-style: normal;
    flex: none;
}

.f-abc {
    padding-left: 21px;
    font-size: 10px;
    font-weight: 700;
}

.dim .f-icon {
    color: #3d7a9c;
}

.mea .f-icon {
    color: #37a076;
}

.calc {
    position: absolute;
    left: 18px;
    font-style: normal;
    font-size: 10px;
    font-weight: 700;
}

.field-sep {
    height: 1px;
    margin: 1px 6px 0 15px;
    background: #e0e0e0;
}

/* shelves cards */
.cards {
    width: 167px;
    flex: none;
    padding-left: 6px;
}

.card {
    width: 154px;
    margin-bottom: 7px;
    padding: 0 4px;
    background: #f9f9f9;
    border: 1px solid #d6d6d6;
}

.card h5 {
    margin: 0;
    padding: 0 2px;
    height: 32px;
    line-height: 29px;
    font-size: 12.700px;
    font-weight: 400;
    color: #666;
}

.card-pages { height: 62px; margin-bottom: 6px; }
.card-filters { height: 100px; }
.card-marks { height: 240px; }
.card-values { height: 124px; }

.card-pages h5 { line-height: 29px; }

.pill {
    display: flex;
    align-items: center;
    justify-content: space-between;
    height: 20px;
    margin-bottom: 3px;
    padding: 0 11px;
    border-radius: 10px;
    font-size: 13px;
    color: #eef6f9;
    white-space: nowrap;
}

.pill-blue {
    background: #4c95b4;
}

.pill-green {
    background: #00b27f;
}

.marks-select {
    height: 21px;
    margin: 3px 2px 6px;
    display: flex;
    align-items: center;
    padding-left: 12px;
    gap: 7px;
    background: #fff;
    border: 1px solid #d4d4d4;
    font-size: 12px;
    color: #666;
}

.marks-arrow {
    margin-left: auto;
    width: 18px;
    height: 19px;
    border-left: 1px solid #d4d4d4;
    display: flex;
    align-items: center;
    justify-content: center;
    color: #666;
}

.marks-grid {
    display: grid;
    grid-template-columns: 43px 42px 43px;
    grid-auto-rows: 42px;
    column-gap: 6px;
    row-gap: 6px;
    margin: 0 2px 7px;
}

.mark-btn {
    display: flex;
    flex-direction: column;
    align-items: center;
    justify-content: flex-end;
    gap: 3px;
    padding-bottom: 1px;
    background: #f9f9f9;
    border: 1px solid #d4d4d4;
    font-size: 12px;
    color: #444;
    white-space: nowrap;
}

.mark-off {
    color: #b0b0b0;
}

.mark-pill {
    height: 23px;
    display: flex;
    align-items: center;
    padding-left: 9px;
    gap: 4px;
}

.mark-pill .pill {
    width: 111px;
    margin: 0;
    padding: 0 7px 0 11px;
}

/* columns, rows and the sheet */
.workspace {
    flex: 1;
}

.shelf {
    height: 28px;
    margin-bottom: 6px;
    display: flex;
    align-items: center;
    background: #fafafa;
    border-top: 1px solid #d6d6d6;
    border-bottom: 1px solid #d6d6d6;
    border-left: 1px solid #d6d6d6;
}

.shelf-label {
    width: 124px;
    height: 26px;
    display: flex;
    align-items: center;
    gap: 7px;
    padding-left: 7px;
    border-right: 1px solid #d6d6d6;
    font-size: 13px;
    color: #666;
}

.pill-shelf {
    width: 148px;
    margin: 0 0 0 2px;
    justify-content: flex-start;
}

.pill-plus {
    margin-right: 6px;
}

.sheet {
    width: 823px;
    height: 518px;
    background: #fff;
    border: 1px solid #dedede;
}

.sheet-title {
    margin: 0;
    height: 47px;
    padding-top: 10px;
    font-size: 21.250px;
    line-height: 29px;
    font-weight: 700;
    text-align: center;
    color: #4a4a4a;
}

.chart {
    display: block;
}

.ax-head {
    font-size: 12px;
    fill: #444;
}

.ax-y text {
    font-size: 12.500px;
    fill: #8a8a8a;
}

.ax-x text {
    font-size: 12px;
    fill: #8a8a8a;
}

.areas polygon {
    stroke: #7b7b7b;
    stroke-width: 1.200;
    stroke-linejoin: round;
}

.a-blue { fill: #6c90b6; }
.a-orange { fill: #f4a453; }
.a-red { fill: #e6767b; }

/* show me */
.showme {
    position: absolute;
    left: 1158px;
    top: 48px;
    width: 204px;
    height: 592px;
}

.showme-tab {
    position: absolute;
    top: 0;
    right: 0;
    width: 111px;
    height: 37px;
    z-index: 1;
    display: flex;
    align-items: center;
    gap: 6px;
    padding: 0 0 7px 11px;
    background: #f9f9f9;
    border: 1px solid #dcdcdc;
    border-bottom: 0;
    font-size: 13px;
    color: #444;
}

.showme-panel {
    position: absolute;
    top: 36px;
    left: 0;
    width: 204px;
    height: 556px;
    padding: 14px 13px 0;
    background: #f9f9f9;
    border: 1px solid #dcdcdc;
    box-shadow: 2px 2px 3px rgba(0, 0, 0, .2);
}

.thumbs {
    display: grid;
    grid-template-columns: repeat(3, 56px);
    grid-auto-rows: 42px;
    column-gap: 4px;
    row-gap: 4px;
}

.thumb {
    display: block;
    width: 56px;
    height: 42px;
    background: #fff;
    border: 1px solid #e2e2e2;
}

.thumb-on {
    border: 2px solid #e06c2e;
}

.thumb-txt text {
    font-size: 5px;
    fill: #666;
}

.hint {
    margin: 0 0 0 2px;
    display: flex;
    align-items: center;
    font-size: 13px;
    color: #444;
    white-space: pre;
}

.hint b {
    color: #222;
}

.hint-first {
    margin-top: 17px;
    height: 18px;
}

.hint-date {
    margin-top: 6px;
    height: 18px;
    font-size: 12.200px;
}

.hint-date svg {
    margin: -6px 0 0 6px;
    color: #555;
}

.hint-dim {
    margin-top: 5px;
    height: 20px;
    font-size: 12.200px;
}

.hint-mea {
    margin-top: 8px;
    height: 20px;
    font-size: 12.200px;
}

.hint-pill {
    height: 20px;
    margin: -4px 0 0 0;
    padding: 0 12px;
    line-height: 19px;
    border-radius: 10px;
    font-size: 13px;
    color: #eef6f9;
}

.hint-dim .hint-pill {
    margin-left: 2px;
    padding: 0 11.500px;
}

/* sheet tabs */
.tabs {
    height: 30px;
    display: flex;
    background: #e6e6e6;
    border-top: 1px solid #d0d0d0;
    border-bottom: 1px solid #d0d0d0;
}

.tab {
    display: flex;
    align-items: center;
    justify-content: center;
    gap: 6px;
    border-right: 1px solid #d0d0d0;
    font-size: 12.500px;
    color: #777;
    white-space: nowrap;
}

.tab-src { width: 131px; justify-content: flex-start; padding-left: 10px; font-size: 13px; }
.tab-on { width: 56px; background: #fff; font-size: 13px; font-weight: 700; color: #555; border-right: 1px solid #d0d0d0; }
.tab-sheet { width: 57px; }
.tab-dash { width: 102px; }
.tab-story { width: 71px; }
.tab-new { width: 32px; }

/* status bar */
.status {
    height: 20px;
    display: flex;
    align-items: center;
    padding-bottom: 1px;
    background: #f0f0f0;
    font-size: 11.300px;
    color: #555;
    white-space: nowrap;
}

.st-marks { width: 73px; padding-left: 3px; }
.st-dims { width: 120px; }
.st-sum { width: 806px; }

.st-cell {
    height: 20px;
    display: flex;
    align-items: center;
    border-left: 1px solid #d4d4d4;
}

.st-c1 { width: 128px; }
.st-c2 { width: 27px; }
.st-c3 { width: 27px; }
.st-c4 { width: 47px; }
.st-nav { width: 71px; padding-left: 8px; }
.st-views { width: 68px; padding-left: 8px; }
.st-views svg + svg { margin-left: 9px; }

/* taskbar */
.taskbar {
    height: 40px;
    display: flex;
    align-items: center;
    background: linear-gradient(90deg, #20363f 0%, #1e3340 50%, #1a2b44 100%);
    color: #fff;
    font-family: "Noto Sans", sans-serif;
}

.tk-start {
    width: 48px;
    display: flex;
    justify-content: center;
}

.tk-search {
    width: 344px;
    height: 40px;
    display: flex;
    align-items: center;
    gap: 11px;
    padding-left: 12px;
    background: #f0f0f0;
    border: 1px solid #c9c9c9;
    border-width: 1px 1px 0;
    color: #222;
    font-size: 14px;
}

.tk-app {
    position: relative;
    width: 49px;
    height: 40px;
    flex: none;
    display: flex;
    align-items: center;
    justify-content: center;
}

.tk-view svg {
    margin-right: 4px;
}

.tk-run::after {
    content: "";
    position: absolute;
    left: 5px;
    right: 4px;
    bottom: 0;
    height: 2px;
    background: #76b9ed;
}

.tk-active {
    background: #47565f;
}

.tk-active::after {
    left: 0;
    right: 0;
}

.tk-tray {
    flex: 1;
    display: flex;
    align-items: center;
    font-size: 13px;
    position: relative;
    height: 40px;
}

.tk-sun { margin-left: 118px; }
.tk-temp { margin-left: 10px; }
.tk-sky { margin-left: 9px; }
.tk-chev { margin-left: 17px; }
.tk-meet { margin-left: 11px; }
.tk-wifi { margin-left: 12px; }
.tk-vol { margin-left: 8px; }
.tk-lang { margin-left: 11px; font-size: 12px; }

.tk-clock {
    display: flex;
    flex-direction: column;
    align-items: center;
    margin-left: 12px;
    font-size: 11.800px;
    line-height: 18px;
}

.tk-note {
    position: relative;
    margin-left: 14px;
    display: flex;
}

.tk-note b {
    position: absolute;
    left: 8px;
    top: 8px;
    width: 16px;
    height: 16px;
    border-radius: 50%;
    background: #333;
    border: 1px solid #666;
    font-size: 11px;
    line-height: 14px;
    text-align: center;
}
```
